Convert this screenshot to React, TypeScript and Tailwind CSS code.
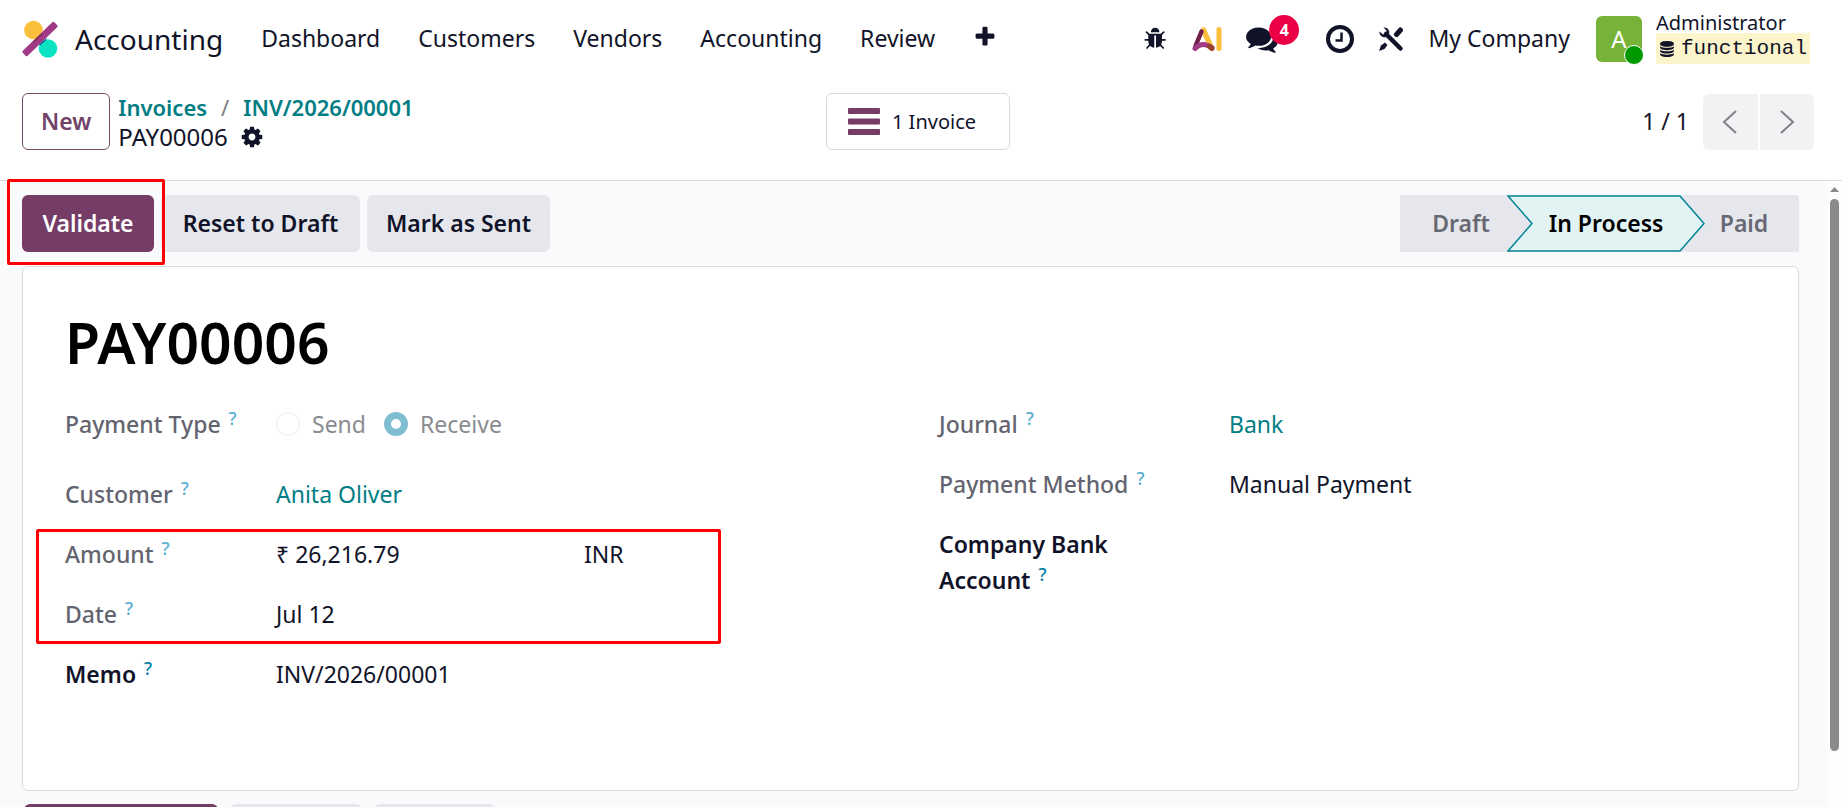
import type { ReactNode } from "react";

const menuItems = ["Dashboard", "Customers", "Vendors", "Accounting", "Review"];

const glyphs = {
  bug: "M1632 960q0 26-19 45t-45 19h-224q0 171-67 290l208 209q19 19 19 45t-19 45q-18 19-45 19t-45-19l-198-197q-5 5-15 13t-42 28.5-65 36.5-82 29-97 13v-896h-128v896q-51 0-101.5-13.5t-87-33-66-39-43.5-32.5l-15-14-183 207q-20 21-48 21-24 0-43-16-19-18-20.5-44.5t15.5-46.5l202-227q-58-114-58-274h-224q-26 0-45-19t-19-45 19-45 45-19h224v-294l-173-173q-19-19-19-45t19-45 45-19 45 19l173 173h844l173-173q19-19 45-19t45 19 19 45-19 45l-173 173v294h224q26 0 45 19t19 45zm-480-576h-640q0-133 93.5-226.5t226.5-93.5 226.5 93.5 93.5 226.5z",
  plus: "M1600 736v192q0 40-28 68t-68 28h-416v416q0 40-28 68t-68 28h-192q-40 0-68-28t-28-68v-416h-416q-40 0-68-28t-28-68v-192q0-40 28-68t68-28h416v-416q0-40 28-68t68-28h192q40 0 68 28t28 68v416h416q40 0 68 28t28 68z",
  comments: "M1408 768q0 139-94 257t-256.5 186.5-353.5 68.5q-86 0-176-16-124 88-278 128-36 9-86 16h-3q-11 0-20.5-8t-11.5-21q-1-3-1-6.5t.5-6.5 2-6l2.5-5 3.5-5.5 4-5 4.5-5 4-4.5q5-6 23-25t26-29.5 22.5-29 25-38.5 20.5-44q-124-72-195-177t-71-224q0-139 94-257t256.5-186.5 353.5-68.5 353.5 68.5 256.5 186.5 94 257zm384 256q0 120-71 224.5t-195 176.5q10 24 20.5 44t25 38.5 22.5 29 26 29.5 23 25q1 1 4 4.5t4.5 5 4 5 3.5 5.5l2.5 5 2 6 .5 6.5-1 6.5q-3 14-13 22t-22 7q-50-7-86-16-154-40-278-128-90 16-176 16-271 0-472-132 58 4 88 4 161 0 309-45t264-129q125-92 192-212t67-254q0-77-23-152 129 71 204 178t75 230z",
  cog: "M1152 896q0-106-75-181t-181-75-181 75-75 181 75 181 181 75 181-75 75-181zm512-109v222q0 12-8 23t-20 13l-185 28q-19 54-39 91 35 50 107 138 10 12 10 25t-9 23q-27 37-99 108t-94 71q-12 0-26-9l-138-108q-44 23-91 38-16 136-29 186-7 28-36 28h-222q-14 0-24.5-8.5t-11.5-21.5l-28-184q-49-16-90-37l-141 107q-10 9-25 9-14 0-25-11-126-114-165-168-7-10-7-23 0-12 8-23 15-21 51-66.5t54-70.5q-27-50-41-99l-183-27q-13-2-21-12.5t-8-23.5v-222q0-12 8-23t19-13l186-28q14-46 39-92-40-57-107-138-10-12-10-24 0-10 9-23 26-36 98.5-107.5t94.5-71.5q13 0 26 10l138 107q44-23 91-38 16-136 29-186 7-28 36-28h222q14 0 24.5 8.5t11.5 21.5l28 184q49 16 90 37l142-107q9-9 24-9 13 0 25 10 129 119 165 170 7 8 7 22 0 12-8 23-15 21-51 66.5t-54 70.5q26 50 41 98l183 28q13 2 21 12.5t8 23.5z",
  database: "M896 768q237 0 443-43t325-127v170q0 69-103 128t-280 93.5-385 34.5-385-34.5-280-93.5-103-128v-170q119 84 325 127t443 43zm0 768q237 0 443-43t325-127v170q0 69-103 128t-280 93.5-385 34.5-385-34.5-280-93.5-103-128v-170q119 84 325 127t443 43zm0-384q237 0 443-43t325-127v170q0 69-103 128t-280 93.5-385 34.5-385-34.5-280-93.5-103-128v-170q119 84 325 127t443 43zm0-1152q208 0 385 34.5t280 93.5 103 128v128q0 69-103 128t-280 93.5-385 34.5-385-34.5-280-93.5-103-128v-128q0-69 103-128t280-93.5 385-34.5z",
};

function Glyph({ name, className }: { name: keyof typeof glyphs; className: string }) {
  return (
    <svg className={className} viewBox="0 0 1792 1792" fill="currentColor" aria-hidden="true">
      <path d={glyphs[name]} />
    </svg>
  );
}

function AppLogo() {
  return (
    <svg className="h-[38px] w-[38px] shrink-0" viewBox="0 0 38 38" aria-hidden="true">
      <circle cx="12.500" cy="10" r="9.300" fill="#fbbf3b" />
      <circle cx="27" cy="28.500" r="9.300" fill="#0be3c3" />
      <rect x="-3" y="15.500" width="44" height="7" rx="1.500" fill="#a13a86" transform="rotate(-44 19 19)" />
      <path d="M21.500 12.500 21 15 13.500 22 12 21.500Z" fill="#7d2a4e" />
      <path d="M18 25 26 17.500 24.500 20.500 19 25.500Z" fill="#0b4a8a" />
    </svg>
  );
}

function AiLogo() {
  return (
    <svg className="h-[26px] w-[30px]" viewBox="0 0 30 26" fill="none" strokeLinecap="round" aria-hidden="true">
      <path d="M11.500 4 19.500 22" stroke="#fbbf3b" strokeWidth="5.500" />
      <path d="M27 3.500V22.500" stroke="#fbbf3b" strokeWidth="5" />
      <path d="M9.500 5.500 3.500 20" stroke="#6f1f4a" strokeWidth="4.500" />
      <path d="M3 22.500Q10 15 20 21.500" stroke="#a13a86" strokeWidth="5" />
      <path d="M17.500 20.500 20 22.500" stroke="#97402f" strokeWidth="5" />
    </svg>
  );
}

function ToolsIcon() {
  return (
    <svg className="h-[26px] w-[26px]" viewBox="0 0 26 26" aria-hidden="true">
      <path d="M8 8 22.500 22.500" stroke="currentColor" strokeWidth="4.500" strokeLinecap="round" />
      <path d="M5.500 1.500A5 5 0 0 1 11 8L8 11A5 5 0 0 1 1.500 5.500L5 8.500 8.500 7.500 8.500 4.500Z" fill="currentColor" />
      <path d="M18.500 8.500 22.500 4" stroke="currentColor" strokeWidth="5" strokeLinecap="round" />
      <path d="M1 25 3 19.500 7 16.500 9.500 19 6.500 23Z" fill="currentColor" />
    </svg>
  );
}

function ClockIcon() {
  return (
    <svg className="h-7 w-7" viewBox="0 0 28 28" fill="none" stroke="currentColor" aria-hidden="true">
      <circle cx="14" cy="14" r="12" strokeWidth="4" />
      <path d="M15.500 7.500V15.500H9.500" strokeWidth="2.500" />
    </svg>
  );
}

function Navbar() {
  return (
    <header className="flex h-[77px] items-center justify-between pr-8 pl-[21px]">
      <nav className="flex items-center gap-[38px]">
        <a href="#home" className="flex items-center gap-4 text-[28px] leading-9">
          <AppLogo />
          Accounting
        </a>
        {menuItems.map((item) => (
          <a key={item} href={"#" + item.toLowerCase()}>
            {item}
          </a>
        ))}
        <button aria-label="More">
          <Glyph name="plus" className="-mt-1 h-6 w-6" />
        </button>
      </nav>

      <div className="flex items-center">
        <button aria-label="Debug" className="mr-6">
          <Glyph name="bug" className="h-6 w-6" />
        </button>
        <button aria-label="AI" className="mr-6">
          <AiLogo />
        </button>
        <button aria-label="Messages" className="relative mr-12">
          <Glyph name="comments" className="h-8 w-8" />
          <span className="absolute -top-2 left-[23px] flex h-[30px] w-[30px] items-center justify-center rounded-full bg-[#eb0046] text-base font-bold text-white">
            4
          </span>
        </button>
        <button aria-label="Activities" className="mr-6">
          <ClockIcon />
        </button>
        <button aria-label="Tools" className="mr-6">
          <ToolsIcon />
        </button>
        <button className="mr-[26px]">My Company</button>
        <button className="flex items-center gap-[14px] text-left">
          <span className="relative flex h-[46px] w-[46px] items-center justify-center rounded-md bg-[#76b338] text-2xl text-white">
            A
            <span className="absolute -right-[2px] -bottom-[3px] h-5 w-5 rounded-full border border-white bg-[#009a00]" />
          </span>
          <span className="flex flex-col text-xl leading-5">
            <span>Administrator</span>
            <span className="flex h-[31px] items-center gap-[6px] bg-[#fcf5cc] px-[3px] font-['Liberation_Mono',monospace] text-[21px]">
              <Glyph name="database" className="h-4 w-4" />
              functional
            </span>
          </span>
        </button>
      </div>
    </header>
  );
}

function ControlPanel() {
  return (
    <div className="grid h-[104px] grid-cols-3 items-center border-b border-[#d8dadd] pr-7 pb-[14px] pl-[22px]">
      <div className="flex items-center gap-2">
        <button className="h-[57px] rounded-md border border-[#714b67] px-[18px] font-semibold text-[#714367]">New</button>
        <div className="leading-[30px]">
          <div className="flex gap-[14px] text-[22px] font-semibold text-[#017e84]">
            <a href="#invoices">Invoices</a>
            <span className="font-normal text-[#7b7d85]">/</span>
            <a href="#invoice">INV/2026/00001</a>
          </div>
          <div className="flex items-center gap-3 text-2xl leading-[30px]">
            PAY00006
            <button aria-label="Actions">
              <Glyph name="cog" className="h-6 w-6" />
            </button>
          </div>
        </div>
      </div>

      <button className="flex h-[57px] w-[184px] items-center gap-3 justify-self-center rounded-md border border-[#d8dadd] pl-[21px] text-xl">
        <svg className="h-[27px] w-8" viewBox="0 0 32 27" fill="#753c66" aria-hidden="true">
          <rect width="32" height="6" rx="1" />
          <rect y="10.500" width="32" height="6" rx="1" />
          <rect y="21" width="32" height="6" rx="1" />
        </svg>
        1 Invoice
      </button>

      <div className="flex items-center justify-self-end">
        <span className="mr-[14px]">1 / 1</span>
        <div className="flex gap-[2px] text-[#808084]">
          <button aria-label="Previous" className="flex h-14 w-[55px] items-center justify-center rounded-l-md bg-[#f2f2f4]">
            <svg className="h-6 w-4" viewBox="0 0 16 24" fill="none" stroke="currentColor" strokeWidth="2">
              <path d="M14 1 2 12 14 23" />
            </svg>
          </button>
          <button aria-label="Next" className="flex h-14 w-[54px] items-center justify-center rounded-r-md bg-[#f2f2f4]">
            <svg className="h-6 w-4" viewBox="0 0 16 24" fill="none" stroke="currentColor" strokeWidth="2">
              <path d="M2 1 14 12 2 23" />
            </svg>
          </button>
        </div>
      </div>
    </div>
  );
}

function StatusBar() {
  return (
    <div className="flex items-center justify-between font-semibold">
      <div className="flex gap-[7px]">
        <div className="relative">
          <button className="h-[57px] w-[132px] rounded-md bg-[#753c66] text-white">Validate</button>
          <div className="pointer-events-none absolute -top-4 -right-[11px] -bottom-[13px] -left-[15px] z-10 rounded-xs border-3 border-[#ff0000]" />
        </div>
        <button className="h-[57px] w-[199px] rounded-md bg-[#e6e7ec]">Reset to Draft</button>
        <button className="h-[57px] w-[183px] rounded-md bg-[#e6e7ec]">Mark as Sent</button>
      </div>

      <div className="flex h-[57px] rounded-xs bg-[#e6e7ec] text-[#666873]">
        <button className="w-[107px] pl-[15px]">Draft</button>
        <button className="relative w-[198px] text-black">
          <svg className="absolute inset-0 h-full w-full" viewBox="0 0 198 57" preserveAspectRatio="none" aria-hidden="true">
            <path d="M1 1H173L197 28.500 173 56H1L25 28.500Z" fill="#e2f3f4" stroke="#018597" strokeWidth="1.500" />
          </svg>
          <span className="relative">In Process</span>
        </button>
        <button className="w-[94px] pr-[16px]">Paid</button>
      </div>
    </div>
  );
}

function Hint({ strong }: { strong?: boolean }) {
  return (
    <sup className={strong ? "-top-2 ml-2 text-lg leading-none font-medium text-[#0180a5]" : "-top-2 ml-2 text-lg leading-none font-medium text-[#5aaed0]"}>
      ?
    </sup>
  );
}

function Field({ label, children }: { label: string; children: ReactNode }) {
  return (
    <div className="flex">
      <dt className="w-[var(--label)] shrink-0 font-medium text-[#63646f]">
        {label}
        <Hint />
      </dt>
      <dd className="flex-1">{children}</dd>
    </div>
  );
}

function Sheet() {
  return (
    <div className="mt-[14px] rounded-md border border-[#d8dadd] bg-white px-[42px] pt-[35px] pb-[98px]">
      <h1 className="mb-6 text-[57px] leading-[80px] font-semibold text-black">PAY00006</h1>
      <div className="grid grid-cols-[874px_1fr] leading-9">
        <dl className="flex flex-col gap-6 [--label:211px]">
          <div className="mb-[10px]">
            <Field label="Payment Type">
              <div className="flex items-center text-[#8a8b90]">
                <input id="send" type="radio" name="type" disabled className="h-6 w-6 appearance-none rounded-full border border-[#ececee]" />
                <label htmlFor="send" className="mr-[18px] ml-3">Send</label>
                <input
                  id="receive"
                  type="radio"
                  name="type"
                  disabled
                  defaultChecked
                  className="h-6 w-6 appearance-none rounded-full border-[7px] border-[#7fbdd2] bg-white"
                />
                <label htmlFor="receive" className="ml-3">Receive</label>
              </div>
            </Field>
          </div>
          <Field label="Customer">
            <a href="#customer" className="text-[#017e84]">Anita Oliver</a>
          </Field>
          <div className="relative flex flex-col gap-6">
            <Field label="Amount">
              <div className="flex">
                <span className="w-[308px]">₹ 26,216.79</span>
                <span>INR</span>
              </div>
            </Field>
            <Field label="Date">Jul 12</Field>
            <div className="pointer-events-none absolute -top-[7px] -bottom-[12px] -left-[29px] w-[685px] rounded-xs border-3 border-[#ff0000]" />
          </div>
          <div className="flex">
            <dt className="w-[var(--label)] shrink-0 font-semibold">
              <label htmlFor="memo">Memo</label>
              <Hint strong />
            </dt>
            <dd className="flex-1">
              <input id="memo" defaultValue="INV/2026/00001" className="h-9 w-full outline-none" />
            </dd>
          </div>
        </dl>

        <dl className="flex flex-col gap-6 [--label:290px]">
          <Field label="Journal">
            <a href="#bank" className="text-[#017e84]">Bank</a>
          </Field>
          <Field label="Payment Method">Manual Payment</Field>
          <div className="flex">
            <dt className="w-[var(--label)] shrink-0 font-semibold">
              <label htmlFor="account">
                Company Bank
                <br />
                Account
              </label>
              <Hint strong />
            </dt>
            <dd className="flex-1">
              <input id="account" className="h-9 w-full outline-none" />
            </dd>
          </div>
        </dl>
      </div>
    </div>
  );
}

export default function App() {
  return (
    <div className="flex h-screen flex-col overflow-hidden bg-white font-['Noto_Sans',sans-serif] text-[23px] text-[#111429]">
      <Navbar />
      <ControlPanel />
      <main className="flex min-h-0 flex-1 bg-[#f9fafc]">
        <div className="min-w-0 flex-1 pt-[14px] pr-7 pl-[22px]">
          <StatusBar />
          <Sheet />
          <div className="mt-[13px] flex gap-3 pl-[2px]">
            <button aria-label="Send message" className="h-[57px] w-[194px] rounded-md bg-[#753c66]" />
            <button aria-label="Log note" className="h-[57px] w-[132px] rounded-md bg-[#e6e7ec]" />
            <button aria-label="Activity" className="h-[57px] w-[121px] rounded-md bg-[#e6e7ec]" />
          </div>
        </div>
        <div className="flex w-[15px] flex-col items-center bg-[#fdfdfb] pt-[6px] pb-14">
          <svg className="mb-[7px] h-[5px] w-[9px] shrink-0" viewBox="0 0 9 5" fill="#8a8a8a" aria-hidden="true">
            <path d="M0 5 4.500 0 9 5Z" />
          </svg>
          <div className="w-[9px] flex-1 rounded-full bg-[#8a8a8a]" />
        </div>
      </main>
    </div>
  );
}
